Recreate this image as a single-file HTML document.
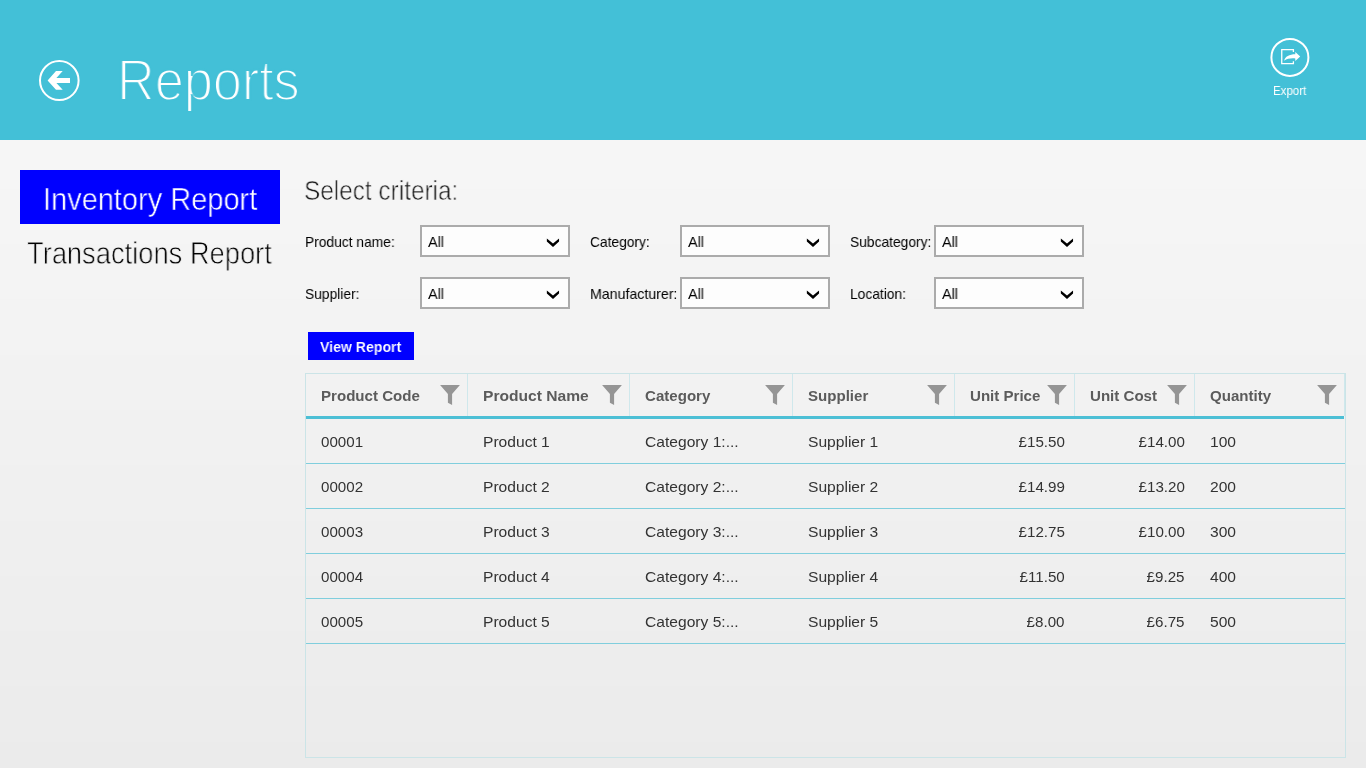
<!DOCTYPE html>
<html lang="en">
<head>
<meta charset="utf-8">
<title>Reports</title>
<style>
*{box-sizing:border-box;margin:0;padding:0}
html,body{width:1366px;height:768px;overflow:hidden}
body{position:relative;font-family:"Liberation Sans",sans-serif;color:#000;
 background:linear-gradient(to bottom,#f6f6f6 0px,#f6f6f6 189px,#f5f5f5 189px,#f5f5f5 244px,#f4f4f4 244px,#f4f4f4 299.5px,#f3f3f3 299.5px,#f3f3f3 355px,#f2f2f2 355px,#f2f2f2 410px,#f1f1f1 410px,#f1f1f1 465.5px,#f0f0f0 465.5px,#f0f0f0 521px,#efefef 521px,#efefef 576px,#eeeeee 576px,#eeeeee 631px,#ededed 631px,#ededed 686.5px,#ececec 686.5px,#ececec 742px,#ebebeb 742px,#ebebeb 768px)}
.abs{position:absolute;white-space:nowrap;line-height:1;transform-origin:left top;will-change:transform}
#hdr{position:absolute;left:0;top:0;width:1366px;height:140px;background:#43c0d7}
#title{left:117px;top:51px;font-size:58px;color:#fff;transform:scaleX(.9);-webkit-text-stroke:2px #43c0d7}
#export{left:1273.2px;top:85.3px;font-size:12.4px;color:#fff;transform:scaleX(.93)}
#nav1{position:absolute;left:20px;top:170px;width:260px;height:54px;background:#0000ff}
#nav1t{left:43px;top:183.6px;font-size:30.5px;color:#fff;transform:scaleX(.95);-webkit-text-stroke:.5px #0000ff}
#nav2t{left:27px;top:237.8px;font-size:30.5px;color:#000;transform:scaleX(.895);-webkit-text-stroke:.8px #f4f4f4}
#crit{left:303.5px;top:177.2px;font-size:28px;color:#1c1c1c;transform:scaleX(.87);-webkit-text-stroke:.6px #f5f5f5}
.lbl{font-size:15px;color:#000;transform:scaleX(.92)}
.cb{position:absolute;width:150px;height:32px;border:2px solid #ababab;background:#fdfdfd}
.cb span{position:absolute;left:6px;top:7px;font-size:15px;line-height:1;color:#000;transform:scaleX(.96);transform-origin:left top}
.cb svg{position:absolute;left:-2px;top:-2px}
#vr{position:absolute;left:308px;top:332px;width:106px;height:28px;background:#0000ff}
#vrt{left:320px;top:339px;font-size:15px;font-weight:bold;color:#fff;transform:scaleX(.94);-webkit-text-stroke:.12px #0000ff}
#grid{position:absolute;left:305px;top:373px;width:1041px;height:385px;border:1px solid #cbe4e7;overflow:hidden}
#ghead{position:absolute;left:0;top:0;width:1039px;height:42px}
#gline{position:absolute;left:0;top:42px;width:1038px;height:3px;background:#4cbfd5}
.hc{position:absolute;top:0;height:42px;border-right:1px solid #cfe8ec}
.hc span{position:absolute;left:15px;top:13.8px;font-size:15px;font-weight:bold;color:#5b5b5b;line-height:1;white-space:nowrap;transform:scaleX(1.005);transform-origin:left top}
.hc svg{position:absolute;top:9px}
.row{position:absolute;left:0;width:1040px;height:45px;border-bottom:1px solid #80cedd}
.row span{position:absolute;top:14.6px;font-size:15px;line-height:1;color:#333;white-space:nowrap;transform:scaleX(1.01);transform-origin:left top}
.row span.num{transform-origin:right top}
.row span.w{transform:scaleX(1.04)}
.hc span.w{transform:scaleX(1.04)}
.row span,.hc span,.cb span{will-change:transform}
</style>
</head>
<body>
<div id="hdr"></div>
<svg class="abs" style="left:36px;top:57px" width="48" height="48" viewBox="0 0 48 48">
 <ellipse cx="23.3" cy="23.55" rx="19.3" ry="19.5" fill="none" stroke="#fff" stroke-width="2"/>
 <path d="M11.6 23.4 L20 14 L26.7 14 L20.4 21 L34 21 L34 26 L20.4 26 L26.7 32.8 L20 32.8 Z" fill="#fff"/>
</svg>
<div id="title" class="abs">Reports</div>
<svg class="abs" style="left:1265px;top:33px" width="50" height="50" viewBox="0 0 50 50">
 <circle cx="24.9" cy="24.4" r="18.5" fill="none" stroke="#fff" stroke-width="2"/>
 <path d="M28.4 19 L28.4 16.65 L16.75 16.65 L16.75 30.6 L28.4 30.6 L28.4 28.3" fill="none" stroke="#fff" stroke-width="1.3"/>
 <path d="M19.2 27.7 C19.8 23.4 24.6 21.2 30.3 21.2 L30.3 18.9 L35.2 23.4 L30.3 28 L30.3 25.4 C25.6 25.1 22 25.6 19.2 27.7 Z" fill="#fff"/>
</svg>
<div id="export" class="abs">Export</div>

<div id="nav1"></div>
<div id="nav1t" class="abs">Inventory Report</div>
<div id="nav2t" class="abs">Transactions Report</div>

<div id="crit" class="abs">Select criteria:</div>

<div class="abs lbl" style="left:305px;top:234px">Product name:</div>
<div class="cb" style="left:420px;top:225px"><span>All</span><svg width="150" height="32" viewBox="0 0 150 32"><path d="M126.85 13.4 L126.85 16.6 L133 21.9 L139.05 16.6 L139.05 13.4 L133 18.6 Z" fill="#000"/></svg></div>
<div class="abs lbl" style="left:590px;top:234px">Category:</div>
<div class="cb" style="left:680px;top:225px"><span>All</span><svg width="150" height="32" viewBox="0 0 150 32"><path d="M126.85 13.4 L126.85 16.6 L133 21.9 L139.05 16.6 L139.05 13.4 L133 18.6 Z" fill="#000"/></svg></div>
<div class="abs lbl" style="left:850px;top:234px">Subcategory:</div>
<div class="cb" style="left:934px;top:225px"><span>All</span><svg width="150" height="32" viewBox="0 0 150 32"><path d="M126.85 13.4 L126.85 16.6 L133 21.9 L139.05 16.6 L139.05 13.4 L133 18.6 Z" fill="#000"/></svg></div>
<div class="abs lbl" style="left:305px;top:286px">Supplier:</div>
<div class="cb" style="left:420px;top:277px"><span>All</span><svg width="150" height="32" viewBox="0 0 150 32"><path d="M126.85 13.4 L126.85 16.6 L133 21.9 L139.05 16.6 L139.05 13.4 L133 18.6 Z" fill="#000"/></svg></div>
<div class="abs lbl" style="left:590px;top:286px;transform:scaleX(.945)">Manufacturer:</div>
<div class="cb" style="left:680px;top:277px"><span>All</span><svg width="150" height="32" viewBox="0 0 150 32"><path d="M126.85 13.4 L126.85 16.6 L133 21.9 L139.05 16.6 L139.05 13.4 L133 18.6 Z" fill="#000"/></svg></div>
<div class="abs lbl" style="left:850px;top:286px">Location:</div>
<div class="cb" style="left:934px;top:277px"><span>All</span><svg width="150" height="32" viewBox="0 0 150 32"><path d="M126.85 13.4 L126.85 16.6 L133 21.9 L139.05 16.6 L139.05 13.4 L133 18.6 Z" fill="#000"/></svg></div>
<div id="vr"></div>
<div id="vrt" class="abs">View Report</div>

<div id="grid">
 <div id="ghead">
<div class="hc" style="left:0px;width:162px"><span>Product Code</span><svg width="22" height="22" viewBox="0 0 22 22" style="left:133px"><path d="M1.1 1.9 L20.9 1.9 L13.1 10.9 L13.1 22 L8.9 19.8 L8.9 10.9 Z" fill="#959595"/></svg></div>
<div class="hc" style="left:162px;width:162px"><span class="w">Product Name</span><svg width="22" height="22" viewBox="0 0 22 22" style="left:133px"><path d="M1.1 1.9 L20.9 1.9 L13.1 10.9 L13.1 22 L8.9 19.8 L8.9 10.9 Z" fill="#959595"/></svg></div>
<div class="hc" style="left:324px;width:163px"><span>Category</span><svg width="22" height="22" viewBox="0 0 22 22" style="left:134px"><path d="M1.1 1.9 L20.9 1.9 L13.1 10.9 L13.1 22 L8.9 19.8 L8.9 10.9 Z" fill="#959595"/></svg></div>
<div class="hc" style="left:487px;width:162px"><span>Supplier</span><svg width="22" height="22" viewBox="0 0 22 22" style="left:133px"><path d="M1.1 1.9 L20.9 1.9 L13.1 10.9 L13.1 22 L8.9 19.8 L8.9 10.9 Z" fill="#959595"/></svg></div>
<div class="hc" style="left:649px;width:120px"><span>Unit Price</span><svg width="22" height="22" viewBox="0 0 22 22" style="left:91px"><path d="M1.1 1.9 L20.9 1.9 L13.1 10.9 L13.1 22 L8.9 19.8 L8.9 10.9 Z" fill="#959595"/></svg></div>
<div class="hc" style="left:769px;width:120px"><span>Unit Cost</span><svg width="22" height="22" viewBox="0 0 22 22" style="left:91px"><path d="M1.1 1.9 L20.9 1.9 L13.1 10.9 L13.1 22 L8.9 19.8 L8.9 10.9 Z" fill="#959595"/></svg></div>
<div class="hc" style="left:889px;width:150px"><span>Quantity</span><svg width="22" height="22" viewBox="0 0 22 22" style="left:121px"><path d="M1.1 1.9 L20.9 1.9 L13.1 10.9 L13.1 22 L8.9 19.8 L8.9 10.9 Z" fill="#959595"/></svg></div>
 </div>
 <div id="gline"></div>
<div class="row" style="top:45px"><span style="left:15px">00001</span><span class="w" style="left:177px">Product 1</span><span class="w" style="left:339px">Category 1:...</span><span class="w" style="left:502px">Supplier 1</span><span class="num" style="right:281.5px">£15.50</span><span class="num" style="right:161.5px">£14.00</span><span class="w" style="left:904px">100</span></div>
<div class="row" style="top:90px"><span style="left:15px">00002</span><span class="w" style="left:177px">Product 2</span><span class="w" style="left:339px">Category 2:...</span><span class="w" style="left:502px">Supplier 2</span><span class="num" style="right:281.5px">£14.99</span><span class="num" style="right:161.5px">£13.20</span><span class="w" style="left:904px">200</span></div>
<div class="row" style="top:135px"><span style="left:15px">00003</span><span class="w" style="left:177px">Product 3</span><span class="w" style="left:339px">Category 3:...</span><span class="w" style="left:502px">Supplier 3</span><span class="num" style="right:281.5px">£12.75</span><span class="num" style="right:161.5px">£10.00</span><span class="w" style="left:904px">300</span></div>
<div class="row" style="top:180px"><span style="left:15px">00004</span><span class="w" style="left:177px">Product 4</span><span class="w" style="left:339px">Category 4:...</span><span class="w" style="left:502px">Supplier 4</span><span class="num" style="right:281.5px">£11.50</span><span class="num" style="right:161.5px">£9.25</span><span class="w" style="left:904px">400</span></div>
<div class="row" style="top:225px"><span style="left:15px">00005</span><span class="w" style="left:177px">Product 5</span><span class="w" style="left:339px">Category 5:...</span><span class="w" style="left:502px">Supplier 5</span><span class="num" style="right:281.5px">£8.00</span><span class="num" style="right:161.5px">£6.75</span><span class="w" style="left:904px">500</span></div>
</div>
</body>
</html>
